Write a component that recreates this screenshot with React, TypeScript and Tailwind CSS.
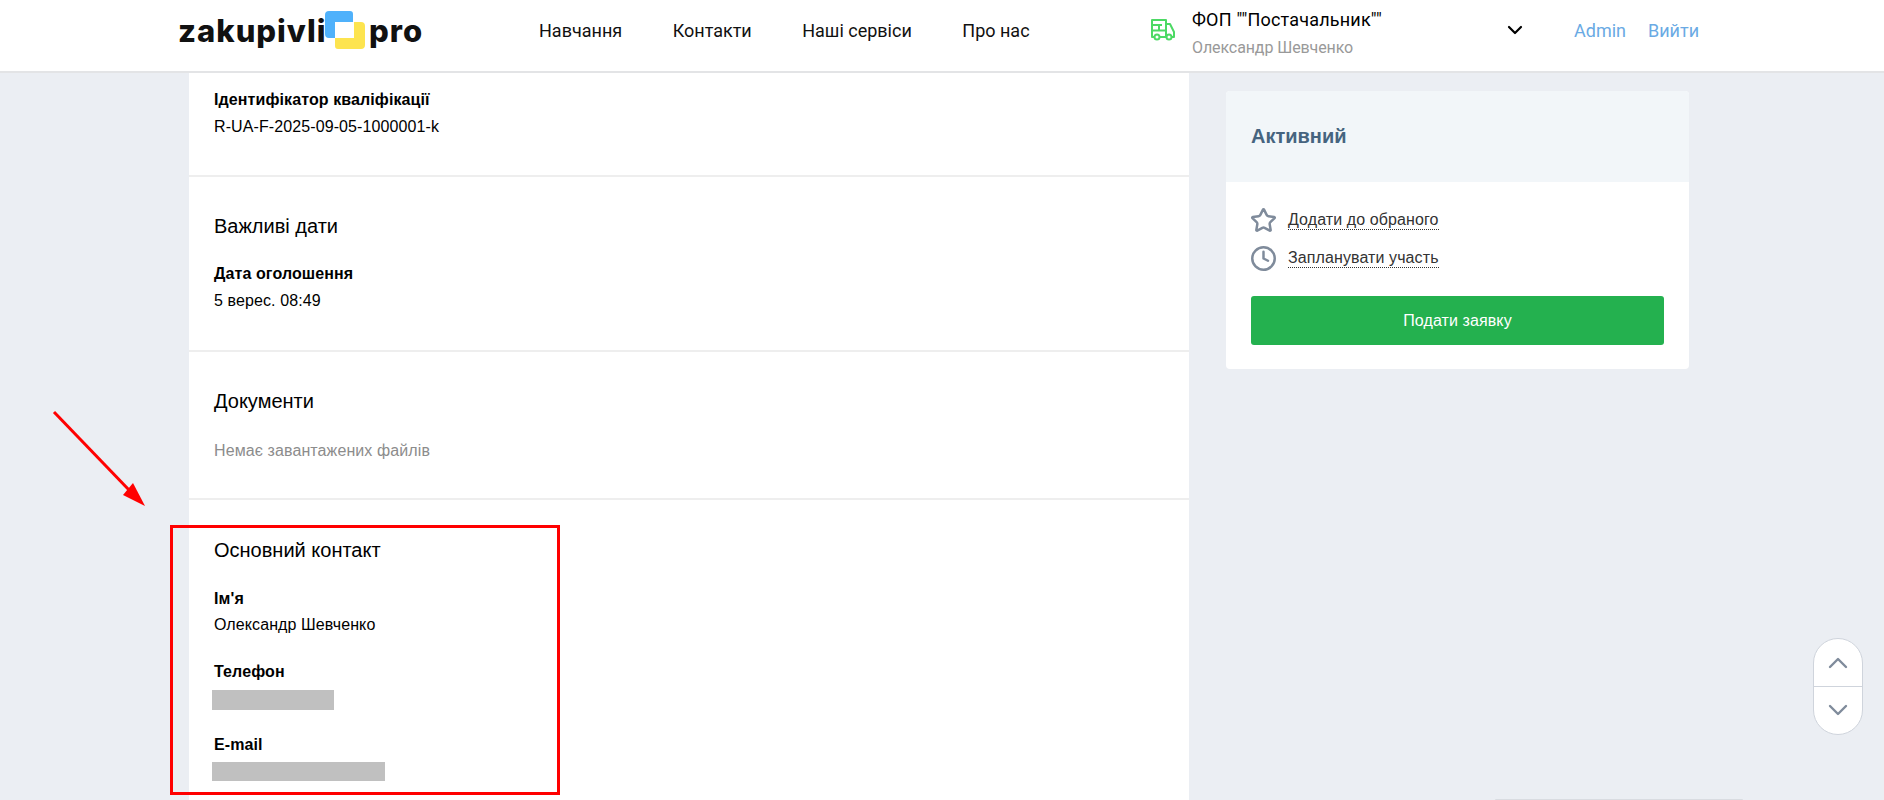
import type { ReactNode } from 'react'
import { Star, Clock, ChevronDown, ChevronUp } from 'lucide-react'

const arial = "font-['Liberation_Sans',Arial,sans-serif]"

const navItems = ['Навчання', 'Контакти', 'Наші сервіси', 'Про нас']

function Logo() {
  return (
    <div className="flex items-center">
      <span className="w-[145px] font-['Inter',sans-serif] text-[31px] font-extrabold leading-none tracking-[1px] text-[#111]">
        zakupivli
      </span>
      <svg width="42" height="38" viewBox="0 0 42 38">
        <path d="M2 4a4 4 0 0 1 4-4h21a3 3 0 0 1 3 3v8H12v16H6a4 4 0 0 1-4-4z" fill="#4fb1fb" />
        <path d="M31 11h7a4 4 0 0 1 4 4v19a4 4 0 0 1-4 4H15a3 3 0 0 1-3-3v-8h19z" fill="#fde44f" />
      </svg>
      <span className="ml-[4px] font-['Inter',sans-serif] text-[31px] font-extrabold leading-none tracking-[1px] text-[#111]">
        pro
      </span>
    </div>
  )
}

function TruckIcon() {
  return (
    <svg width="24" height="22" viewBox="0 0 24 22" fill="none" stroke="#4cd964" strokeWidth="2" strokeLinejoin="round">
      <path d="M3.500 18H1V1h14v17M8.500 18h7" />
      <path d="M15 5h4l4 8v5h-2.500" />
      <path d="M1 6h10M1 11.500h14M8 6v5.500" />
      <circle cx="6" cy="18" r="2.500" />
      <circle cx="18" cy="18" r="2.500" />
    </svg>
  )
}

function Header() {
  return (
    <header className="flex h-[73px] items-center border-b-2 border-[#e3e4e6] bg-white pb-[11px]">
      <div className="ml-[178px] w-[361px]">
        <Logo />
      </div>
      <nav className="flex w-[612px] gap-[50.500px] font-['Roboto',sans-serif] text-[18px] text-[#111]">
        {navItems.map((item) => (
          <a key={item}>{item}</a>
        ))}
      </nav>
      <TruckIcon />
      <div className="ml-[17px] w-[311px] pt-[4px] font-['Roboto',sans-serif]">
        <div className="text-[18px] leading-[26px] tracking-[0.2px] text-black">ФОП ""Постачальник""</div>
        <div className="mt-[5px] text-[16px] leading-[20px] tracking-[-0.1px] text-[#999]">Олександр Шевченко</div>
      </div>
      <ChevronDown className="h-[24px] w-[24px] text-black" strokeWidth={2.2} />
      <a className="ml-[47px] font-['Roboto',sans-serif] text-[18px] text-[#6aaae4]">Admin</a>
      <a className="ml-[22px] font-['Roboto',sans-serif] text-[18px] text-[#6aaae4]">Вийти</a>
    </header>
  )
}

function Field({ label, children, className }: { label: string; children: ReactNode; className?: string }) {
  return (
    <div className={className}>
      <div className="text-[16px] font-bold leading-[24px] tracking-[0.1px] text-black">{label}</div>
      <div className="mt-[3px] text-[16px] leading-[24px] tracking-[0.1px] text-black">{children}</div>
    </div>
  )
}

function Main() {
  return (
    <main className={`${arial} ml-[189px] w-[1000px] bg-white`}>
      <section className="h-[104px] border-b-2 border-[#eeeeee] pl-[25px] pt-[15px]">
        <Field label="Ідентифікатор кваліфікації">R-UA-F-2025-09-05-1000001-k</Field>
      </section>
      <section className="h-[175px] border-b-2 border-[#eeeeee] pl-[25px] pt-[34px]">
        <h2 className="text-[20px] leading-[30px] text-black">Важливі дати</h2>
        <Field label="Дата оголошення" className="mt-[21px]">
          5 верес. 08:49
        </Field>
      </section>
      <section className="h-[148px] border-b-2 border-[#eeeeee] pl-[25px] pt-[34px]">
        <h2 className="text-[20px] leading-[30px] text-black">Документи</h2>
        <p className="mt-[23px] text-[16px] leading-[24px] tracking-[0.1px] text-[#8c8c8c]">Немає завантажених файлів</p>
      </section>
      <section className="h-[300px] pl-[25px] pt-[35px]">
        <h2 className="text-[20px] leading-[30px] text-black">Основний контакт</h2>
        <Field label="Ім'я" className="mt-[22px]">
          <div className="-mt-[1px]">Олександр Шевченко</div>
        </Field>
        <Field label="Телефон" className="mt-[23px]">
          <div className="-ml-[2px] mt-[6px] h-[20px] w-[122px] bg-[#c0c0c0]" />
        </Field>
        <Field label="E-mail" className="mt-[23px]">
          <div className="-ml-[2px] mt-[5px] h-[19px] w-[173px] bg-[#c0c0c0]" />
        </Field>
      </section>
    </main>
  )
}

function Sidebar() {
  return (
    <aside className={`${arial} ml-[37px] mt-[18px] h-[278px] w-[463px] overflow-hidden rounded-[4px] bg-white`}>
      <div className="flex h-[91px] items-center bg-[#f2f6f9] pb-[2px] pl-[25px] text-[20px] font-bold text-[#46647f]">
        Активний
      </div>
      <div className="px-[25px] pt-[25px]">
        <div className="flex h-[26px] items-center">
          <Star className="-ml-[1px] h-[27px] w-[27px] shrink-0 text-[#7f8b9b]" strokeWidth={2.2} />
          <span className="ml-[11px] border-b border-dotted border-[#333] text-[16px] leading-[18px] tracking-[0.1px] text-[#333]">
            Додати до обраного
          </span>
        </div>
        <div className="mt-[12px] flex h-[26px] items-center">
          <Clock className="-ml-[1px] h-[27px] w-[27px] shrink-0 text-[#7f8b9b]" strokeWidth={2.2} />
          <span className="ml-[11px] border-b border-dotted border-[#333] text-[16px] leading-[18px] tracking-[0.1px] text-[#333]">
            Запланувати участь
          </span>
        </div>
        <button
          type="button"
          className="mt-[25px] h-[49px] w-[413px] rounded-[3px] bg-[#24b14f] text-[16px] tracking-[0.1px] text-white"
        >
          Подати заявку
        </button>
      </div>
    </aside>
  )
}

function ScrollButtons() {
  return (
    <div className="absolute left-[1813px] top-[638px] flex h-[97px] w-[50px] flex-col overflow-hidden rounded-[25px] border border-[#cfd4dc] bg-white text-[#7f8b9b]">
      <div className="flex h-1/2 items-center justify-center border-b border-[#cfd4dc] pt-[2px]">
        <ChevronUp className="h-[32px] w-[32px]" strokeWidth={1.8} />
      </div>
      <div className="flex h-1/2 items-center justify-center">
        <ChevronDown className="h-[32px] w-[32px]" strokeWidth={1.8} />
      </div>
    </div>
  )
}

function Annotations() {
  return (
    <>
      <svg width="100" height="106" viewBox="0 0 100 106" className="absolute left-[50px] top-[405px]">
        <line x1="4" y1="7" x2="80" y2="86" stroke="#ff0000" strokeWidth="3" />
        <polygon points="73,90 95,101 83,78" fill="#ff0000" />
      </svg>
      <div className="absolute left-[170px] top-[525px] h-[270px] w-[390px] border-[3px] border-[#ff0000]" />
    </>
  )
}

export default function App() {
  return (
    <div className="relative h-[800px] w-[1884px] overflow-hidden bg-[#ebeef3]">
      <Header />
      <div className="flex">
        <Main />
        <Sidebar />
      </div>
      <ScrollButtons />
      <div className="absolute left-[1495px] top-[799px] h-[1px] w-[248px] rounded-t-[2px] bg-[#d9dce1]" />
      <Annotations />
    </div>
  )
}
